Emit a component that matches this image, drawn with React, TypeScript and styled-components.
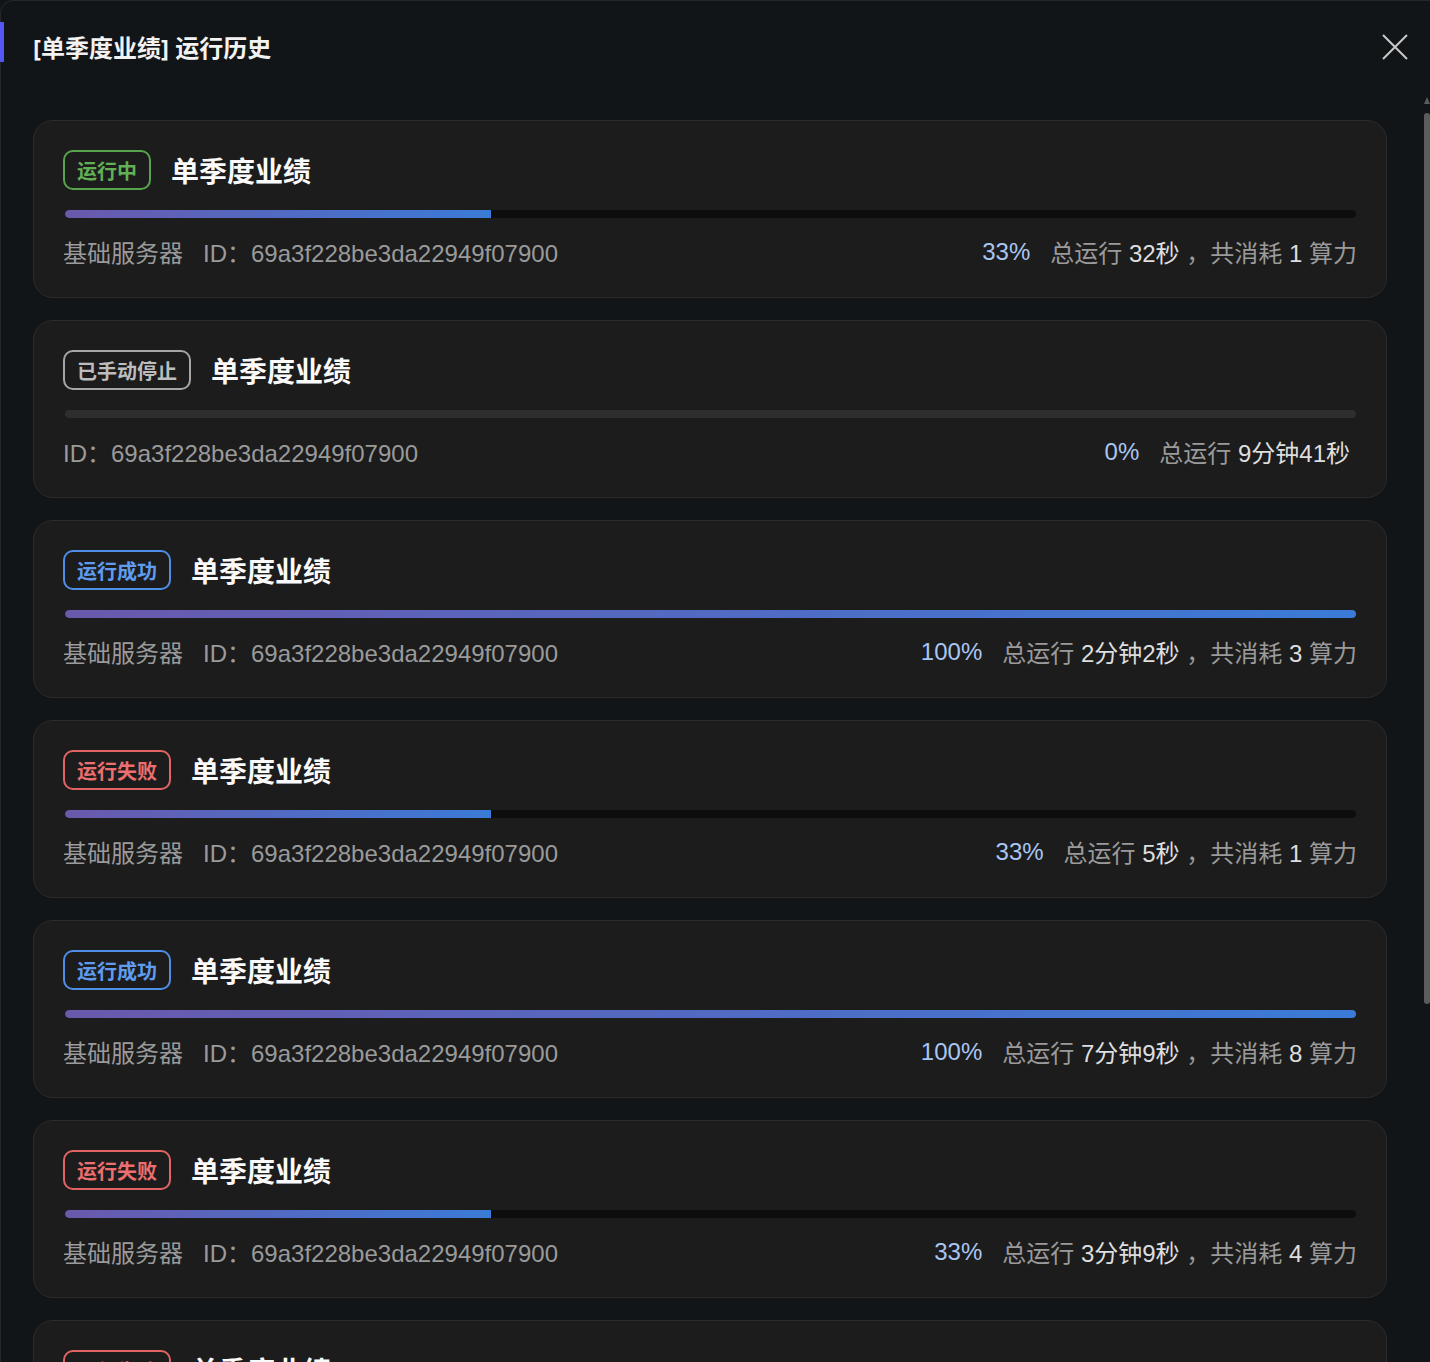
import React from 'react';
import styled, { createGlobalStyle, css } from 'styled-components';

const GlobalStyle = createGlobalStyle`
  html, body {
    margin: 0;
    padding: 0;
    background: #121517;
    overflow: hidden;
  }
  * { box-sizing: border-box; }
`;

type Status = 'running' | 'stopped' | 'success' | 'failed';

interface Run {
  id: string;
  status: Status;
  server?: string;
  percent: number;
  duration: string;
  cost?: number;
}

const badgeColors: Record<Status, { border: string; text: string; label: string }> = {
  running: { border: '#58a44e', text: '#62b055', label: '运行中' },
  stopped: { border: '#a6a6a6', text: '#bdbdbd', label: '已手动停止' },
  success: { border: '#4f8ee6', text: '#5f9cf0', label: '运行成功' },
  failed: { border: '#e06464', text: '#ec6f6f', label: '运行失败' },
};

const runs: Run[] = [
  { id: '69a3f228be3da22949f07900', status: 'running', server: '基础服务器', percent: 33, duration: '32秒', cost: 1 },
  { id: '69a3f228be3da22949f07900', status: 'stopped', percent: 0, duration: '9分钟41秒' },
  { id: '69a3f228be3da22949f07900', status: 'success', server: '基础服务器', percent: 100, duration: '2分钟2秒', cost: 3 },
  { id: '69a3f228be3da22949f07900', status: 'failed', server: '基础服务器', percent: 33, duration: '5秒', cost: 1 },
  { id: '69a3f228be3da22949f07900', status: 'success', server: '基础服务器', percent: 100, duration: '7分钟9秒', cost: 8 },
  { id: '69a3f228be3da22949f07900', status: 'failed', server: '基础服务器', percent: 33, duration: '3分钟9秒', cost: 4 },
  { id: '69a3f228be3da22949f07900', status: 'failed', server: '基础服务器', percent: 33, duration: '6秒', cost: 1 },
];

const Panel = styled.div`
  position: relative;
  height: 100vh;
  display: flex;
  flex-direction: column;
  background: #121517;
  border-top: 1px solid #24282b;
  border-left: 1px solid #24282b;
  border-top-left-radius: 14px;
  font-family: 'Noto Sans', 'Noto Sans CJK SC', sans-serif;
  color: #fff;
`;

const Header = styled.header`
  position: relative;
  height: 95px;
  flex-shrink: 0;
  display: flex;
  align-items: center;
  justify-content: space-between;
  padding: 0 20px 2px 32px;
  margin-top: -1px;
`;

const Accent = styled.span`
  position: absolute;
  left: -1px;
  top: 22px;
  width: 4px;
  height: 40px;
  background: #5457f2;
`;

const HeaderTitle = styled.h2`
  margin: 0;
  font-size: 24px;
  font-weight: 700;
  color: #f2f2f2;
`;

const CloseButton = styled.button`
  width: 30px;
  height: 30px;
  padding: 0;
  border: none;
  background: transparent;
  color: #c8c8c8;
  cursor: pointer;
  display: flex;
  align-items: center;
  justify-content: center;
`;

const List = styled.div`
  flex: 1;
  min-height: 0;
  overflow: hidden;
  padding: 25px 43px 0 32px;
  display: flex;
  flex-direction: column;
  gap: 22px;
`;

/* custom scrollbar drawn over the right edge */
const ScrollArrow = styled.span`
  position: absolute;
  right: 0;
  top: 96px;
  width: 0;
  height: 0;
  border-left: 3px solid transparent;
  border-right: 3px solid transparent;
  border-bottom: 7px solid #5c5c5c;
`;

const ScrollThumb = styled.span`
  position: absolute;
  right: 0;
  top: 112px;
  width: 6px;
  height: 891px;
  border-radius: 3px;
  background: #5c5c5c;
`;

const Card = styled.section`
  flex-shrink: 0;
  height: 178px;
  background: #1c1c1c;
  border: 1px solid #2b2b2b;
  border-radius: 20px;
  padding: 28px 29px 0 29px;
  display: flex;
  flex-direction: column;
`;

const TitleRow = styled.div`
  display: flex;
  align-items: center;
  gap: 20px;
  height: 42px;
`;

const Badge = styled.span<{ $status: Status }>`
  height: 40px;
  padding: 0 12px;
  display: inline-flex;
  align-items: center;
  border-radius: 10px;
  font-size: 20px;
  font-weight: 700;
  ${({ $status }) => css`
    border: 2px solid ${badgeColors[$status].border};
    color: ${badgeColors[$status].text};
  `}
`;

const Name = styled.h3`
  margin: 0;
  font-size: 28px;
  font-weight: 700;
  color: #fafafa;
`;

const Track = styled.div<{ $empty: boolean }>`
  margin: 19px 1px 0 2px;
  height: 8px;
  border-radius: 4px;
  background: ${({ $empty }) => ($empty ? '#2e2e2e' : '#0d0d0d')};
  overflow: hidden;
`;

const Fill = styled.div`
  height: 100%;
  border-radius: 4px 0 0 4px;
  background: linear-gradient(90deg, #6a59ad 0%, #3a7bd7 100%);
`;

const InfoRow = styled.div`
  margin-top: 16px;
  display: flex;
  align-items: center;
  justify-content: space-between;
  font-family: 'Liberation Sans', 'Noto Sans CJK SC', sans-serif;
  font-size: 24px;
  color: #9a9a9a;
`;

const Meta = styled.div`
  display: flex;
  gap: 20px;
`;

const Stats = styled.div<{ $trail: boolean }>`
  display: flex;
  align-items: center;
  gap: 20px;
  padding-right: ${({ $trail }) => ($trail ? '7px' : '0')};
`;

const Percent = styled.span`
  color: #a9c6f2;
`;

const Strong = styled.span`
  color: #dedede;
`;

function RunCard({ run }: { run: Run }) {
  return (
    <Card>
      <TitleRow>
        <Badge $status={run.status}>{badgeColors[run.status].label}</Badge>
        <Name>单季度业绩</Name>
      </TitleRow>
      <Track $empty={run.percent === 0}>
        {run.percent > 0 && <Fill style={{ width: `${run.percent}%` }} />}
      </Track>
      <InfoRow>
        <Meta>
          {run.server && <span>{run.server}</span>}
          <span>ID：{run.id}</span>
        </Meta>
        <Stats $trail={run.cost === undefined}>
          <Percent>{run.percent}%</Percent>
          <span>
            总运行 <Strong>{run.duration}</Strong>
            {run.cost !== undefined && (
              <>
                {' '}，共消耗 <Strong>{run.cost}</Strong> 算力
              </>
            )}
          </span>
        </Stats>
      </InfoRow>
    </Card>
  );
}

export default function App() {
  return (
    <>
      <GlobalStyle />
      <Panel>
        <Header>
          <Accent />
          <HeaderTitle>[单季度业绩] 运行历史</HeaderTitle>
          <CloseButton aria-label="close">
            <svg width="26" height="26" viewBox="0 0 26 26" fill="none" stroke="currentColor" strokeWidth="2">
              <path d="M1 1 L25 25 M25 1 L1 25" />
            </svg>
          </CloseButton>
        </Header>
        <List>
          {runs.map((run, i) => (
            <RunCard key={i} run={run} />
          ))}
        </List>
        <ScrollArrow />
        <ScrollThumb />
      </Panel>
    </>
  );
}
